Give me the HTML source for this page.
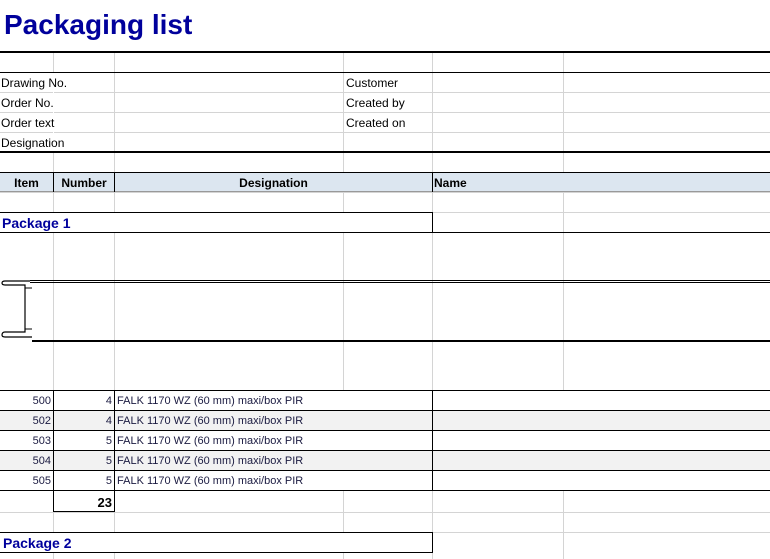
<!DOCTYPE html>
<html><head><meta charset="utf-8"><style>
*{margin:0;padding:0;box-sizing:border-box}
body{width:770px;height:559px;background:#fff;position:relative;overflow:hidden;font-family:"Liberation Sans",Arial,sans-serif;font-size:12px;color:#000}
.a{position:absolute}
.vl{position:absolute;top:52px;bottom:0;width:1px;background:#d4d4d4}
.hl{position:absolute;left:0;right:0;height:1px;background:#d4d4d4}
.t{position:absolute;line-height:20px;white-space:nowrap;top:1px}
.b{position:absolute;background:#000}
.w{position:absolute;background:#fff}
</style></head><body>
<div class="t" style="left:4px;top:8px;line-height:34px;font-size:28px;font-weight:bold;color:#00009c">Packaging list</div>
<!-- gridlines -->
<div class="vl" style="left:53px"></div><div class="vl" style="left:114px"></div><div class="vl" style="left:343px"></div><div class="vl" style="left:432px"></div><div class="vl" style="left:563px"></div>
<div class="hl" style="top:92px"></div><div class="hl" style="top:112px"></div><div class="hl" style="top:132px"></div>
<div class="hl" style="top:192px"></div><div class="hl" style="top:212px"></div>
<div class="hl" style="top:512px"></div><div class="hl" style="top:532px"></div>
<!-- hide col line under info labels -->
<div class="w" style="left:53px;top:73px;width:1px;height:79px"></div>
<!-- thick borders -->
<div class="b" style="left:0;right:0;top:51px;height:2px"></div>
<div class="b" style="left:0;right:0;top:72px;height:1px"></div>
<div class="b" style="left:0;right:0;top:151px;height:2px"></div>
<!-- info text -->
<div class="t" style="left:1px;top:73px">Drawing No.</div>
<div class="t" style="left:1px;top:93px">Order No.</div>
<div class="t" style="left:1px;top:113px">Order text</div>
<div class="t" style="left:1px;top:133px">Designation</div>
<div class="t" style="left:346px;top:73px">Customer</div>
<div class="t" style="left:346px;top:93px">Created by</div>
<div class="t" style="left:346px;top:113px">Created on</div>
<!-- header row -->
<div class="a" style="left:0;right:0;top:172px;height:20px;background:#dce6f0;border-top:1px solid #000;border-bottom:1px solid #999"></div>
<div class="b" style="left:53px;top:172px;width:1px;height:20px"></div>
<div class="b" style="left:114px;top:172px;width:1px;height:20px"></div>
<div class="b" style="left:432px;top:172px;width:1px;height:20px"></div>
<div class="t" style="left:0;width:53px;top:173px;text-align:center;font-weight:bold">Item</div>
<div class="t" style="left:54px;width:60px;top:173px;text-align:center;font-weight:bold">Number</div>
<div class="t" style="left:115px;width:317px;top:173px;text-align:center;font-weight:bold">Designation</div>
<div class="t" style="left:434px;top:173px;font-weight:bold">Name</div>
<!-- package 1 -->
<div class="a" style="left:0;top:212px;width:433px;height:21px;border:1px solid #000;border-left:none;background:#fff"></div>
<div class="b" style="left:0;right:0;top:232px;height:1px"></div>
<div class="t" style="left:2px;top:213px;font-size:14px;font-weight:bold;color:#00009c">Package 1</div>
<!-- drawing -->
<div class="b" style="left:30px;right:0;top:280px;height:1px"></div>
<div class="b" style="left:30px;right:0;top:282px;height:1px"></div>
<div class="b" style="left:32px;right:0;top:340px;height:2px"></div>
<svg class="a" style="left:0;top:270px" width="40" height="80" viewBox="0 0 40 80">
<path d="M30 11 H5 Q2 11 2 13 Q2 15 5 15 H25 V62 H5 Q2 62 2 65 Q2 67 5 67 H32" fill="none" stroke="#000" stroke-width="1.2"/>
<path d="M25 18 H32 M25 59 H32" stroke="#000" stroke-width="1"/>
</svg>
<!-- data rows -->
<div class="w" style="left:0;right:0;top:390px;height:100px"></div>
<div class="a" style="left:0;right:0;top:410px;height:20px;background:#f2f2f2"></div>
<div class="a" style="left:0;right:0;top:450px;height:20px;background:#f2f2f2"></div>
<div class="b" style="left:0;right:0;top:390px;height:1px"></div>
<div class="b" style="left:0;right:0;top:410px;height:1px"></div>
<div class="b" style="left:0;right:0;top:430px;height:1px"></div>
<div class="b" style="left:0;right:0;top:450px;height:1px"></div>
<div class="b" style="left:0;right:0;top:470px;height:1px"></div>
<div class="b" style="left:0;right:0;top:490px;height:1px"></div>
<div class="b" style="left:53px;top:390px;width:1px;height:122px"></div>
<div class="b" style="left:114px;top:390px;width:1px;height:122px"></div>
<div class="b" style="left:53px;top:511px;width:62px;height:1px"></div>
<div class="b" style="left:432px;top:390px;width:1px;height:100px"></div>
<div style="color:#1a1a40;font-size:11px">
<div class="t" style="left:0;width:51px;top:391px;text-align:right">500</div>
<div class="t" style="left:0;width:51px;top:411px;text-align:right">502</div>
<div class="t" style="left:0;width:51px;top:431px;text-align:right">503</div>
<div class="t" style="left:0;width:51px;top:451px;text-align:right">504</div>
<div class="t" style="left:0;width:51px;top:471px;text-align:right">505</div>
<div class="t" style="left:54px;width:58px;top:391px;text-align:right">4</div>
<div class="t" style="left:54px;width:58px;top:411px;text-align:right">4</div>
<div class="t" style="left:54px;width:58px;top:431px;text-align:right">5</div>
<div class="t" style="left:54px;width:58px;top:451px;text-align:right">5</div>
<div class="t" style="left:54px;width:58px;top:471px;text-align:right">5</div>
<div class="t" style="left:117px;top:391px">FALK 1170 WZ (60 mm) maxi/box PIR</div>
<div class="t" style="left:117px;top:411px">FALK 1170 WZ (60 mm) maxi/box PIR</div>
<div class="t" style="left:117px;top:431px">FALK 1170 WZ (60 mm) maxi/box PIR</div>
<div class="t" style="left:117px;top:451px">FALK 1170 WZ (60 mm) maxi/box PIR</div>
<div class="t" style="left:117px;top:471px">FALK 1170 WZ (60 mm) maxi/box PIR</div>
</div>
<div class="t" style="left:54px;width:58px;top:493px;text-align:right;font-weight:bold;font-size:13px">23</div>
<!-- package 2 -->
<div class="a" style="left:0;top:532px;width:433px;height:21px;border:1px solid #000;border-left:none;background:#fff"></div>
<div class="t" style="left:3px;top:533px;font-size:14px;font-weight:bold;color:#00009c">Package 2</div>
</body></html>
